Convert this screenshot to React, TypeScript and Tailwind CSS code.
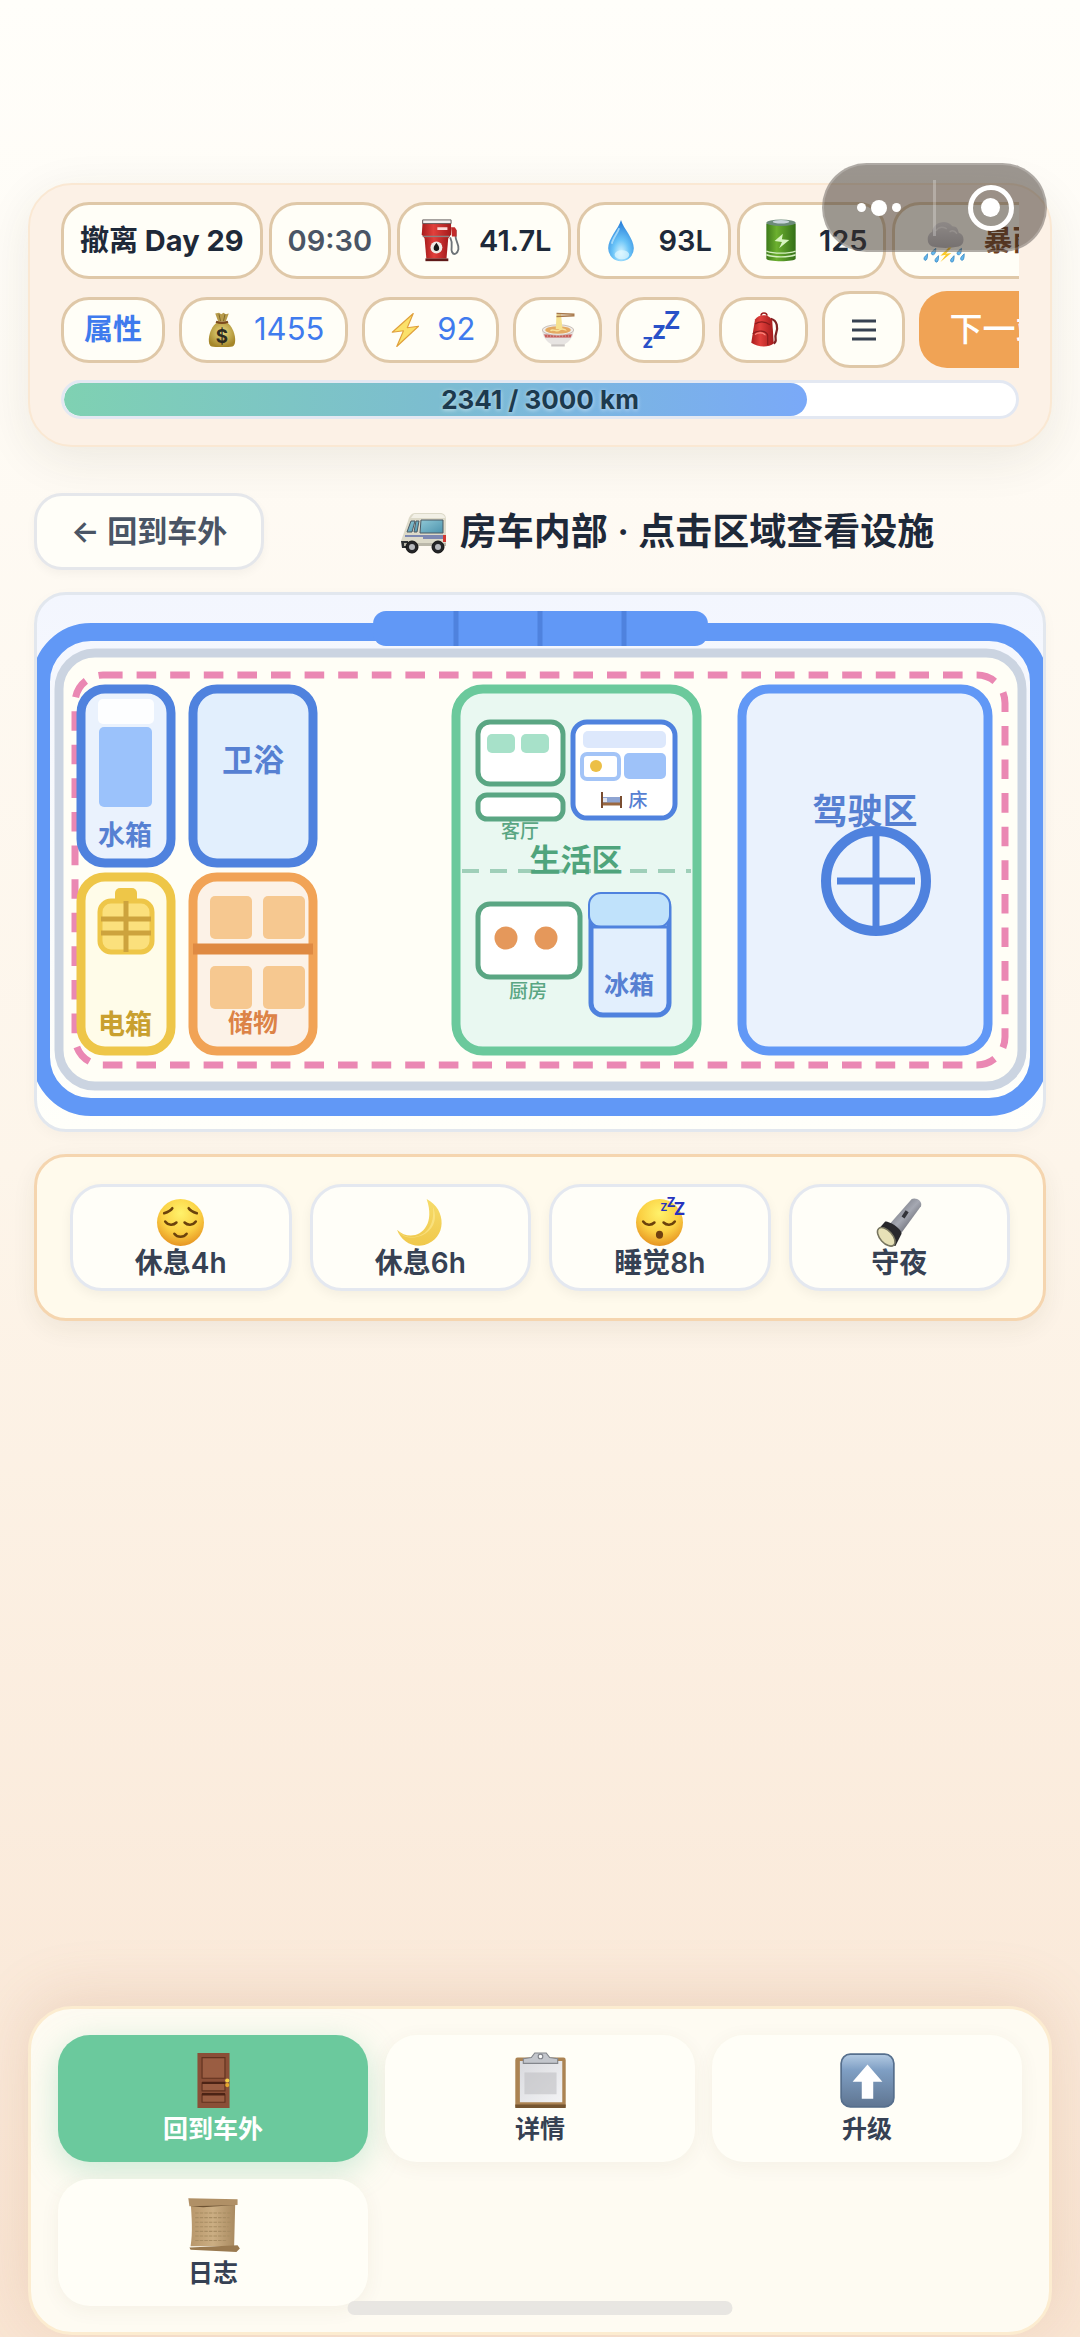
import { useState } from 'react';
import type { ReactNode } from 'react';

type IconName =
  | 'fuel' | 'drop' | 'battery' | 'storm' | 'money' | 'bolt' | 'noodles' | 'zzz' | 'pack'
  | 'van' | 'relieved' | 'moon' | 'sleeping' | 'torch' | 'door' | 'clipboard' | 'up' | 'scroll';

// shared gradients, referenced by id from every icon
function Gradients() {
  return (
    <svg className="absolute w-0 h-0" aria-hidden="true">
      <defs>
        <linearGradient id="red" x1="0" x2="1">
          <stop offset="0" stopColor="#a81c1c" />
          <stop offset=".4" stopColor="#e2403c" />
          <stop offset="1" stopColor="#a31a1b" />
        </linearGradient>
        <radialGradient id="water" cx=".5" cy=".8" r=".7">
          <stop offset="0" stopColor="#d8f5ff" />
          <stop offset=".45" stopColor="#6cc5f8" />
          <stop offset="1" stopColor="#2f86dd" />
        </radialGradient>
        <linearGradient id="green" x1="0" x2="1">
          <stop offset="0" stopColor="#3d7a1a" />
          <stop offset=".35" stopColor="#6cb02f" />
          <stop offset="1" stopColor="#346f18" />
        </linearGradient>
        <linearGradient id="cloud" x1="0" y1="0" x2="0" y2="1">
          <stop offset="0" stopColor="#e2e2e6" />
          <stop offset="1" stopColor="#b2b2b8" />
        </linearGradient>
        <radialGradient id="gold" cx=".5" cy=".4" r=".6">
          <stop offset="0" stopColor="#eadb83" />
          <stop offset="1" stopColor="#a58629" />
        </radialGradient>
        <radialGradient id="face" cx=".5" cy=".3" r=".75">
          <stop offset="0" stopColor="#fff26b" />
          <stop offset=".55" stopColor="#fbd043" />
          <stop offset="1" stopColor="#e38b1d" />
        </radialGradient>
        <linearGradient id="moon" x1="0" y1="0" x2="0" y2="1">
          <stop offset="0" stopColor="#f6dc6a" />
          <stop offset="1" stopColor="#f0c84b" />
        </linearGradient>
        <linearGradient id="metal" x1="0" y1="0" x2="1" y2="1">
          <stop offset="0" stopColor="#5b5d66" />
          <stop offset=".5" stopColor="#a5a8b2" />
          <stop offset="1" stopColor="#3c3d45" />
        </linearGradient>
        <linearGradient id="steel" x1="0" y1="0" x2="0" y2="1">
          <stop offset="0" stopColor="#b4cbe3" />
          <stop offset=".3" stopColor="#7f9fc4" />
          <stop offset="1" stopColor="#5f7591" />
        </linearGradient>
        <linearGradient id="paper" x1="0" x2="1">
          <stop offset="0" stopColor="#b8976b" />
          <stop offset=".5" stopColor="#cbae83" />
          <stop offset="1" stopColor="#a98a60" />
        </linearGradient>
        <linearGradient id="glass" x1="0" y1="0" x2="1" y2="1">
          <stop offset="0" stopColor="#8fc8d6" />
          <stop offset="1" stopColor="#4c93ad" />
        </linearGradient>
        <linearGradient id="sheet" x1="0" y1="0" x2="1" y2="1">
          <stop offset="0" stopColor="#d9dade" />
          <stop offset="1" stopColor="#f3f3f5" />
        </linearGradient>
      </defs>
    </svg>
  );
}

const drawings: Record<IconName, ReactNode> = {
  fuel: (
    <>
      <path d="M36 11l4 2v7c0 4 4 8 3 13s-5 7-7 3c-2-5 2-8-2-16" fill="none" stroke="#6d7378" strokeWidth="2" />
      <path d="M35 9h4l2 3v7h-5z" fill="#c22a2a" />
      <path d="M6 20h26l-2 23H8z" fill="url(#red)" />
      <path d="M4 2h31v15l-3 4H6l-3-4z" fill="url(#red)" />
      <path d="M4 1h31v4H4z" fill="#f0eded" stroke="#5c5555" strokeWidth="1" />
      <path d="M20 9h11v3H20z" fill="#fbd9d7" />
      <path d="M4 19h29" stroke="#8a8080" strokeWidth="1.5" />
      <circle cx="19" cy="31" r="6.5" fill="#efebe6" />
      <path d="M19 26c2 3 3 4 3 6a3 3 0 01-6 0c0-2 1-3 3-6z" fill="#181818" />
      <path d="M7 43h25v3H7z" fill="#5f1918" />
    </>
  ),
  drop: (
    <>
      <path d="M24 1c3 10 14 20 14 31a14 14 0 01-28 0C10 21 21 11 24 1z" fill="url(#water)" />
      <path d="M22 10c-2 6-7 11-8 17" fill="none" stroke="#b4e2fb" strokeWidth="2" opacity=".8" />
      <ellipse cx="25" cy="39" rx="8" ry="5" fill="#dff8ff" opacity=".7" />
    </>
  ),
  battery: (
    <>
      <path d="M8 5v38c0 4 32 4 32 0V5z" fill="url(#green)" />
      <ellipse cx="24" cy="4" rx="16" ry="3.500" fill="#6c8b7a" />
      <ellipse cx="24" cy="3" rx="9" ry="2" fill="#c9d5dc" />
      <path d="M8 35c8 3 24 3 32 0M8 39c8 3 24 3 32 0" fill="none" stroke="#d5efc0" strokeWidth="1.500" />
      <path d="M26 16l-9 8 8 1-3 7 11-9-8-1z" fill="#d8f5c1" />
    </>
  ),
  storm: (
    <>
      <path d="M10 30a9 9 0 010-16C11 4 25-1 32 8c5 0 6 3 7 7a8 8 0 010 15c-9 2-20 2-29 0z" fill="url(#cloud)" />
      <path d="M14 13c3-5 9-5 12-2M29 14c3-2 6-1 8 2" fill="none" stroke="#f0f0f2" strokeWidth="1.500" />
      <path d="M28 31l-9 9 6-1-6 8 12-10-6 1 6-7z" fill="#fbc928" />
      <g fill="#64b8ed" stroke="#3182c0" strokeWidth=".8">
        <path d="M14 32q-7 5-4 7 4 1 4-7zM5 38q-6 5-3 7 3 1 3-7zM17 40q-6 5-3 7 3 1 3-7z" />
        <path d="M42 32q-7 5-4 7 4 1 4-7zM45 38q-6 5-3 7 3 1 3-7zM34 40q-6 5-3 7 3 1 3-7z" />
      </g>
    </>
  ),
  money: (
    <>
      <path d="M17 14C5 24 4 44 10 46c4 1 24 1 28 0 6-2 5-22-7-32z" fill="url(#gold)" />
      <path d="M15 2l4 11h10l4-11-4 1-3-2-3 2-3-2z" fill="#b79b4b" />
      <path d="M20 3l2 9M28 3l-2 9" stroke="#6c5720" strokeWidth="1" />
      <path d="M16 13c5 2 11 2 16 0" fill="none" stroke="#7b4a1e" strokeWidth="3" />
      <text x="24" y="41" textAnchor="middle" fontSize="25" className="font-bold" fill="#2c2a20">$</text>
    </>
  ),
  bolt: (
    <path d="M35 2L7 27l15-2-9 21 29-27-15 2z" fill="#fbe16a" stroke="#e0a03c" strokeWidth="1.500" strokeLinejoin="round" />
  ),
  noodles: (
    <>
      <path d="M3 24h42c0 10-7 16-12 19H15C10 40 3 34 3 24z" fill="#e7e4e2" />
      <path d="M5 30h38l-2 4H7z" fill="#c4534f" />
      <path d="M5 32h38" stroke="#f3dfdc" strokeWidth="1" strokeDasharray="2 2" />
      <ellipse cx="24" cy="24" rx="21" ry="7" fill="#f0ebe7" stroke="#bcb1aa" />
      <ellipse cx="24" cy="24" rx="17" ry="5" fill="#e4aa62" />
      <path d="M14 25c4-4 8 3 12-1s8 1 9 0" fill="none" stroke="#f7e39a" strokeWidth="2" />
      <path d="M22 3h6l2 20h-9z" fill="#f5e290" />
      <path d="M22 2l24 1M22 6l24-1" stroke="#a77749" strokeWidth="2" />
      <path d="M15 43h18v3H15z" fill="#c8c4c2" />
    </>
  ),
  zzz: (
    <g className="font-bold" fill="#2951c8">
      <text x="-1" y="48" fontSize="26">z</text>
      <text x="12" y="36" fontSize="33">z</text>
      <text x="28" y="23" fontSize="33">Z</text>
    </g>
  ),
  pack: (
    <>
      <path d="M33 9c9 2 10 13 7 20s3 9-3 13" fill="none" stroke="#7e2323" strokeWidth="3" />
      <path d="M20 5c0-5 8-5 8 0" fill="none" stroke="#9b1c1c" strokeWidth="2" />
      <path d="M12 10c5-8 20-8 23 2l2 30c-7 6-22 5-30-1z" fill="url(#red)" />
      <path d="M12 16c8-5 14-3 20 1M9 29c7-6 18-4 20 2v13" fill="none" stroke="#891b1b" strokeWidth="1.500" />
      <path d="M12 30c4-3 11-3 14 1" fill="none" stroke="#ff8b80" strokeWidth="1.500" />
    </>
  ),
  van: (
    <>
      <path d="M1 33L8 13c1-4 3-8 7-8h25c4 0 6 2 6 7v24H2z" fill="#dddac9" />
      <path d="M14 6h26c3 0 5 2 5 4H11z" fill="#f2f0e6" />
      <path d="M21 12h22v13H20z" fill="url(#glass)" stroke="#4c5a64" strokeWidth="1" />
      <path d="M11 13h4l-3 11H7zM16 13h3l-2 11h-3z" fill="url(#glass)" stroke="#4c5a64" strokeWidth="1" />
      <path d="M5 28h40M23 30h20" stroke="#5e6eaa" strokeWidth="1.500" />
      <path d="M43 27h3v7h-3z" fill="#d23a34" />
      <path d="M1 33h7v7H2z" fill="#2d3032" />
      <path d="M4 38h42v-3H4z" fill="#bbb8aa" />
      <g fill="#242527" stroke="#111">
        <circle cx="12" cy="39" r="6" />
        <circle cx="38" cy="39" r="6" />
      </g>
      <g fill="#b6b8bc">
        <circle cx="12" cy="39" r="3" />
        <circle cx="38" cy="39" r="3" />
      </g>
    </>
  ),
  relieved: (
    <>
      <circle cx="24" cy="24" r="23" fill="url(#face)" />
      <g fill="none" stroke="#6b420c" strokeWidth="2.500" strokeLinecap="round">
        <path d="M9 23c3 4 8 4 11 1M28 24c3 3 8 3 11-1M8 15c3-1 6-2 8-5M32 10c2 3 5 4 8 5" />
        <path d="M18 35c3 4 9 4 12 0" />
      </g>
    </>
  ),
  moon: (
    <>
      <path d="M30 1c20 10 20 39-2 45C16 49 5 42 1 31c14 14 40 2 29-30z" fill="url(#moon)" />
      <path d="M2 33c14 12 38 3 34-25 11 26-22 39-34 25z" fill="#fff0a0" opacity=".5" />
    </>
  ),
  sleeping: (
    <>
      <circle cx="24" cy="24" r="23" fill="url(#face)" />
      <g fill="none" stroke="#6b420c" strokeWidth="2.500" strokeLinecap="round">
        <path d="M8 23c3 4 8 4 11 1M28 24c3 3 8 3 11-1" />
      </g>
      <ellipse cx="24" cy="36" rx="3.500" ry="4" fill="#704010" />
      <g className="font-bold" fill="#2733bd">
        <text x="25" y="13" fontSize="10">Z</text>
        <text x="31" y="9" fontSize="13">Z</text>
        <text x="38" y="17" fontSize="17">Z</text>
      </g>
    </>
  ),
  torch: (
    <>
      <path d="M36 1c4-2 11 2 9 7L26 34 14 26z" fill="url(#metal)" />
      <path d="M10 23c5 0 16 7 16 12l-6 12C13 46 2 38 3 31z" fill="#28282c" />
      <ellipse cx="11" cy="38" rx="6" ry="11" transform="rotate(-42 11 38)" fill="#e7e1b7" stroke="#77755f" strokeWidth="1.500" />
      <path d="M26 18l4-6 3 2-4 6z" fill="#33343a" />
    </>
  ),
  door: (
    <>
      <path d="M10 0h28v48H10z" fill="#8a4f37" />
      <path d="M14 4h20v18H14zM14 26h20v7H14zM14 36h20v7H14z" fill="#9a5d42" stroke="#61321f" strokeWidth="1" />
      <path d="M14 26h20M14 36h20" stroke="#4c2315" strokeWidth="2" />
      <circle cx="36" cy="24" r="1.800" fill="#f7cf45" />
      <circle cx="36" cy="28" r="1.800" fill="#e8a92e" />
    </>
  ),
  clipboard: (
    <>
      <rect x="2" y="4" width="44" height="44" rx="2" fill="#ab8352" />
      <path d="M2 45h44v3H2z" fill="#755530" />
      <path d="M6 7h37v36H6z" fill="url(#sheet)" />
      <path d="M10 17h28v19H10z" fill="#bfc0c3" opacity=".6" />
      <path d="M9 5l7-1 3-4h10l3 4 7 1v4H9z" fill="#c3c6cc" stroke="#83868c" strokeWidth="1" />
      <circle cx="24" cy="3" r="2" fill="#fdfdfd" stroke="#83868c" strokeWidth="1" />
    </>
  ),
  up: (
    <>
      <rect x="1" y="1" width="46" height="46" rx="8" fill="url(#steel)" stroke="#566f8d" strokeWidth="1.500" />
      <path d="M24 10l13 15h-8v15H19V25h-8z" fill="#fff" />
    </>
  ),
  scroll: (
    <>
      <path d="M4 4h39l-1 39H4c2-12 1-25 0-39z" fill="url(#paper)" />
      <path d="M2 1l43 1v5L3 8z" fill="#b09066" />
      <path d="M4 8l39-1-28 2z" fill="#6d5232" />
      <path d="M3 44l42-2 2 3-3 3-40-2z" fill="#9a7a50" />
      <path d="M8 14h31M8 18h30M8 22h31M8 26h29M8 30h31M8 34h30M8 38h28" stroke="#a88d63" strokeWidth="1" strokeDasharray="3 1" />
    </>
  ),
};

function Icon({ name, className }: { name: IconName; className: string }) {
  return (
    <svg viewBox="0 0 48 48" className={`flex-shrink-0 overflow-visible ${className}`} aria-hidden="true">
      {drawings[name]}
    </svg>
  );
}

const pill = 'flex items-center flex-shrink-0 whitespace-nowrap rounded-[28px] border-[3px] border-[#dfc8a8] bg-[#fffef7]';

const stocks: { icon: IconName; value: string }[] = [
  { icon: 'fuel', value: '41.7L' },
  { icon: 'drop', value: '93L' },
  { icon: 'battery', value: '125' },
];

const rests: { icon: IconName; label: string }[] = [
  { icon: 'relieved', label: '休息4h' },
  { icon: 'moon', label: '休息6h' },
  { icon: 'sleeping', label: '睡觉8h' },
  { icon: 'torch', label: '守夜' },
];

const tabs: { icon: IconName; label: string }[] = [
  { icon: 'door', label: '回到车外' },
  { icon: 'clipboard', label: '详情' },
  { icon: 'up', label: '升级' },
  { icon: 'scroll', label: '日志' },
];

function StatusPanel({ km, total }: { km: number; total: number }) {
  return (
    <header className="mx-7 flex flex-col gap-3 rounded-[44px] border-2 border-[#fae8d3] bg-[#fcf1e6] px-[31px] pt-[17px] pb-[26px] shadow-[0_12px_48px_rgba(60,50,30,0.09)]">
      <div className="flex gap-1.5 overflow-hidden h-[77px] text-[29px] font-semibold text-gray-800">
        <div className={`${pill} px-4 font-bold`}>撤离 Day 29</div>
        <div className={`${pill} px-4 text-gray-600`}>09:30</div>
        {stocks.map((s) => (
          <div key={s.icon} className={`${pill} pl-[19px] pr-4 gap-4`}>
            <Icon name={s.icon} className="w-11 h-11" />
            {s.value}
          </div>
        ))}
        <div className={`${pill} pl-[28px] pr-4 gap-4 font-bold text-[#6f3d1a]`}>
          <Icon name="storm" className="w-11 h-11" />
          暴雨
        </div>
      </div>

      <div className="flex items-center gap-3.5 overflow-hidden h-[77px] text-[31px] text-[#3f7bee]">
        <button className={`${pill} h-[66px] px-5 text-[29px] font-semibold`}>属性</button>
        <button className={`${pill} h-[66px] pl-[22px] pr-[21px] gap-3.5`}>
          <Icon name="money" className="w-9 h-9" />
          1455
        </button>
        <button className={`${pill} h-[66px] pl-[22px] pr-[21px] gap-3.5`}>
          <Icon name="bolt" className="w-9 h-9" />
          92
        </button>
        <button aria-label="noodles" className={`${pill} h-[66px] w-[89px] justify-center`}>
          <Icon name="noodles" className="w-10 h-9" />
        </button>
        <button aria-label="sleep" className={`${pill} h-[66px] w-[89px] justify-center`}>
          <Icon name="zzz" className="w-9 h-9" />
        </button>
        <button aria-label="backpack" className={`${pill} h-[66px] w-[89px] justify-center`}>
          <Icon name="pack" className="w-9 h-9" />
        </button>
        <button aria-label="menu" className={`${pill} h-full w-[83px] justify-center`}>
          <svg viewBox="0 0 24 24" className="w-6 h-6" stroke="#374151" strokeWidth="3">
            <path d="M0 3h24M0 12h24M0 21h24" />
          </svg>
        </button>
        <button className="flex-shrink-0 h-full px-[30px] rounded-[28px] bg-[#f0a355] text-white text-[33px] font-medium whitespace-nowrap">
          下一站
        </button>
      </div>

      <div className="relative h-[39px] rounded-full border-[3px] border-[#e3e8f2] bg-white overflow-hidden">
        <div
          className="h-full rounded-full bg-linear-to-r from-[#7fd1b2] via-[#7cbdd0] to-[#7aa9f8]"
          style={{ width: `${(km / total) * 100}%` }}
        />
        <span className="absolute inset-0 flex items-center justify-center text-[26px] font-bold text-[#1c3a4e] text-shadow-[0_1px_4px_rgba(255,255,255,0.6)]">
          {km} / {total} km
        </span>
      </div>
    </header>
  );
}

function Label({ x, y, size, color, children }: { x: number; y: number; size: number; color: string; children: ReactNode }) {
  return (
    <text x={x} y={y} fontSize={size} fill={color} textAnchor="middle" className={size > 20 ? 'font-semibold' : 'font-medium'}>
      {children}
    </text>
  );
}

// Floor plan of the van, seen from above with the nose on the right
function FloorPlan() {
  return (
    <svg viewBox="0 0 1006 534" className="block w-full" role="img" aria-label="房车内部">
      {/* shell */}
      <rect x="4" y="37" width="998" height="475" rx="50" fill="none" stroke="#6198f6" strokeWidth="18" />
      <rect x="22" y="58" width="963" height="433" rx="36" fill="#fffef6" stroke="#cbd4e1" strokeWidth="9" />
      <rect x="38" y="80" width="930" height="390" rx="28" fill="none" stroke="#ea88b3" strokeWidth="7" strokeDasharray="19.600 14" />
      <rect x="336" y="16" width="335" height="35" rx="13" fill="#6198f6" />
      <path d="M419 16v35M503 16v35M587 16v35" stroke="#4f82de" strokeWidth="5" />

      {/* water tank */}
      <rect x="44" y="94" width="90" height="174" rx="24" fill="#eaf2fd" stroke="#4f82de" strokeWidth="9" />
      <rect x="61" y="104" width="56" height="25" rx="5" fill="#fdfeff" />
      <rect x="62" y="132" width="53" height="80" rx="5" fill="#9bc2fb" />
      <Label x={88} y={250} size={27} color="#5680d2">水箱</Label>

      {/* bathroom */}
      <rect x="156" y="94" width="120" height="174" rx="24" fill="#e2effd" stroke="#4f82de" strokeWidth="9" />
      <Label x={216} y={176} size={31} color="#5680d2">卫浴</Label>

      {/* power box */}
      <rect x="44" y="282" width="90" height="174" rx="24" fill="#fffce9" stroke="#eec648" strokeWidth="9" />
      <rect x="78" y="293" width="22" height="18" rx="5" fill="#eec648" />
      <rect x="63" y="306" width="52" height="51" rx="11" fill="#fbe07c" stroke="#eec648" strokeWidth="5" />
      <path d="M64 324h50M64 338h50M89 306v51" stroke="#cda33d" strokeWidth="5" />
      <Label x={88} y={439} size={27} color="#c9a02f">电箱</Label>

      {/* storage */}
      <rect x="156" y="282" width="120" height="174" rx="24" fill="#fcf2e7" stroke="#f1a356" strokeWidth="9" />
      <g fill="#f6c890">
        <rect x="173" y="301" width="42" height="43" rx="5" />
        <rect x="226" y="301" width="42" height="43" rx="5" />
        <rect x="173" y="371" width="42" height="43" rx="5" />
        <rect x="226" y="371" width="42" height="43" rx="5" />
      </g>
      <path d="M156 354h120" stroke="#df8a42" strokeWidth="11" />
      <Label x={216} y={437} size={25} color="#dc8347">储物</Label>

      {/* living area */}
      <rect x="419" y="94" width="241" height="362" rx="27" fill="#e9f8f1" stroke="#6bc99c" strokeWidth="9" />
      <path d="M425 276h229" stroke="#9fcfb9" strokeWidth="4" strokeDasharray="17 11" />
      <g fill="#fff" stroke="#5aa683" strokeWidth="5">
        <rect x="441" y="127" width="85" height="62" rx="12" />
        <rect x="441" y="200" width="85" height="24" rx="9" />
        <rect x="441" y="309" width="102" height="73" rx="12" />
      </g>
      <rect x="450" y="139" width="28" height="19" rx="5" fill="#a7e1c9" />
      <rect x="484" y="139" width="28" height="19" rx="5" fill="#a7e1c9" />
      <Label x={483} y={243} size={19} color="#5aa683">客厅</Label>
      <circle cx="469" cy="343" r="11.500" fill="#e5985b" />
      <circle cx="509" cy="343" r="11.500" fill="#e5985b" />
      <Label x={491} y={403} size={19} color="#5aa683">厨房</Label>

      {/* bed */}
      <rect x="536" y="127" width="102" height="96" rx="14" fill="#fff" stroke="#4f82de" strokeWidth="5" />
      <rect x="546" y="136" width="83" height="17" rx="5" fill="#dde8fc" />
      <rect x="545" y="159" width="37" height="25" rx="5" fill="#fff" stroke="#a3c4f7" strokeWidth="4" />
      <circle cx="559" cy="171" r="6" fill="#ecbf46" />
      <rect x="587" y="158" width="42" height="26" rx="5" fill="#9ec2f9" />
      <path d="M566 202h17v6h-17z" fill="#8ea4d2" />
      <path d="M565 203h5v4h-5z" fill="#dfe3ee" />
      <path d="M565 209h19" stroke="#9a6840" strokeWidth="3" />
      <path d="M565 197v16M584 201v12" stroke="#7a4d30" strokeWidth="2" />
      <Label x={601} y={212} size={19} color="#5680d2">床</Label>

      {/* fridge */}
      <rect x="554" y="300" width="78" height="120" rx="12" fill="#e2effd" stroke="#4f82de" strokeWidth="5" />
      <rect x="552" y="298" width="81" height="34" rx="12" fill="#c0e2fb" stroke="#4f82de" strokeWidth="2" />
      <path d="M554 332h78" stroke="#4f82de" strokeWidth="3" />
      <Label x={592} y={399} size={25} color="#5680d2">冰箱</Label>
      <Label x={539} y={276} size={31} color="#4fa47c">生活区</Label>

      {/* cockpit */}
      <rect x="705" y="94" width="246" height="362" rx="27" fill="#eaf2fd" stroke="#6198f6" strokeWidth="9" />
      <Label x={828} y={229} size={35} color="#5680d2">驾驶区</Label>
      <circle cx="839" cy="286" r="50" fill="none" stroke="#4f82de" strokeWidth="10" />
      <path d="M839 236v100M800 286h78" stroke="#4f82de" strokeWidth="7" />
    </svg>
  );
}

export default function App() {
  const [active, setActive] = useState('door');

  return (
    <div className="relative min-h-screen flex flex-col overflow-hidden bg-linear-to-b from-[#fffefa] via-[#fdf5ea] to-[#f9e5d3] pt-[183px] pb-0.5 font-['Inter','Noto_Sans_CJK_SC',sans-serif]">
      <Gradients />
      <StatusPanel km={2341} total={3000} />

      {/* Host app capsule, floats over the status panel */}
      <div className="absolute top-[163px] right-[33px] flex items-center w-[225px] h-[89px] rounded-full border-2 border-white/20 bg-[#3a2f28]/50">
        <button aria-label="more" className="flex-1 flex items-center justify-center gap-[5px] h-full">
          <span className="w-[9px] h-[9px] rounded-full bg-white" />
          <span className="w-4 h-4 rounded-full bg-white" />
          <span className="w-[9px] h-[9px] rounded-full bg-white" />
        </button>
        <span className="w-[3px] h-14 bg-white/25" />
        <button aria-label="close" className="flex-1 flex items-center justify-center h-full">
          <span className="flex items-center justify-center w-[46px] h-[46px] rounded-full border-[5px] border-white">
            <span className="w-[19px] h-[19px] rounded-full bg-white" />
          </span>
        </button>
      </div>

      <main className="flex-1 flex flex-col gap-[22px] px-[34px] pt-[46px] pb-8">
        <div className="flex items-center gap-6">
          <button className="h-[77px] px-[34px] rounded-[28px] border-[3px] border-gray-200 bg-[#fffef8] text-[30px] font-semibold text-gray-600 shadow-[0_4px_10px_rgba(0,0,0,0.04)] whitespace-nowrap">
            ← 回到车外
          </button>
          <h1 className="flex-1 flex items-center justify-center gap-3 text-[37px] font-semibold text-gray-800">
            <Icon name="van" className="w-12 h-12" />
            房车内部 · 点击区域查看设施
          </h1>
        </div>

        <section className="overflow-hidden rounded-[32px] border-[3px] border-[#e2e7ee] bg-linear-to-b from-[#f3f6fe] to-[#fffffa] shadow-[0_4px_14px_rgba(0,0,0,0.03)]">
          <FloorPlan />
        </section>

        <section className="grid grid-cols-4 gap-[18px] rounded-[32px] border-[3px] border-[#f5d5af] bg-[#fffaec] px-[33px] py-[27px] shadow-[0_8px_24px_rgba(60,50,30,0.07)]">
          {rests.map((r) => (
            <button
              key={r.icon}
              className="flex flex-col items-center h-[107px] pt-[11px] rounded-[32px] border-[3px] border-[#e4e8f0] bg-[#fffef8] text-[28px] leading-8 font-semibold text-gray-700 shadow-[0_4px_12px_rgba(0,0,0,0.05)]"
            >
              <Icon name={r.icon} className="w-[49px] h-[49px]" />
              {r.label}
            </button>
          ))}
        </section>
      </main>

      <nav className="mx-7 grid grid-cols-3 gap-[17px] rounded-[44px] border-[3px] border-[#fcecd0] bg-[#fefbf2] px-[27px] py-[26px] shadow-[0_-8px_60px_rgba(180,110,70,0.18)]">
        {tabs.map((tab) => (
          <button
            key={tab.icon}
            onClick={() => setActive(tab.icon)}
            className={`flex flex-col items-center gap-[5px] h-[127px] pt-[18px] rounded-[32px] text-[25px] leading-8 font-semibold ${
              active === tab.icon
                ? 'bg-[#6bc99d] text-white shadow-[0_8px_32px_rgba(107,201,157,0.35)]'
                : 'bg-[#fffef7] text-gray-700 shadow-[0_4px_20px_rgba(80,60,40,0.06)]'
            }`}
          >
            <Icon name={tab.icon} className="w-[55px] h-[55px]" />
            {tab.label}
          </button>
        ))}
      </nav>

      {/* home indicator */}
      <div className="absolute bottom-[22px] left-1/2 -translate-x-1/2 w-[385px] h-3.5 rounded-full bg-[#e8e6e2]" />
    </div>
  );
}
